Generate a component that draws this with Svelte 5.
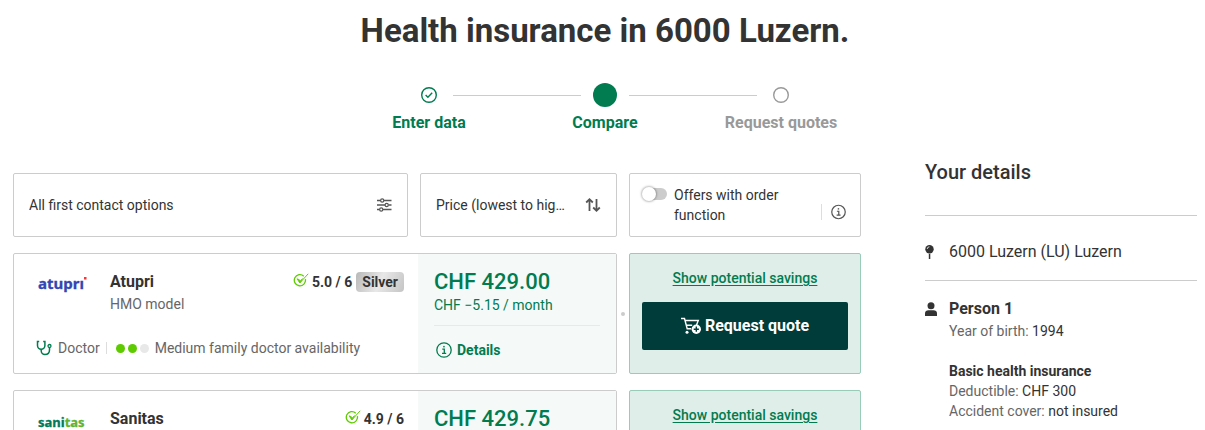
<script lang="ts">
	type Offer = {
		id: string;
		name: string;
		model: string;
		rating: string;
		badge: string | null;
		price: string;
		difference: string;
		availability: number;
	};

	const steps = [
		{ label: 'Enter data', state: 'done' },
		{ label: 'Compare', state: 'current' },
		{ label: 'Request quotes', state: 'open' }
	];

	const offers: Offer[] = [
		{
			id: 'atupri',
			name: 'Atupri',
			model: 'HMO model',
			rating: '5.0 / 6',
			badge: 'Silver',
			price: 'CHF 429.00',
			difference: 'CHF −5.15 / month',
			availability: 2
		},
		{
			id: 'sanitas',
			name: 'Sanitas',
			model: '',
			rating: '4.9 / 6',
			badge: null,
			price: 'CHF 429.75',
			difference: '',
			availability: 0
		}
	];

	let sorting = $state('price-asc');
	let onlyOrderable = $state(false);
</script>

{#snippet infoIcon()}
	<svg class="info-icon" viewBox="0 0 16 16" fill="none" stroke="currentColor" aria-hidden="true">
		<circle cx="8" cy="8" r="7.2" stroke-width="1.3" />
		<path d="M6.3 7.2h2v4M6 11.3h4.2" stroke-width="1.3" />
		<rect x="7.2" y="3.9" width="1.5" height="1.5" fill="currentColor" stroke="none" />
	</svg>
{/snippet}

<div class="page">
	<h1>Health insurance in 6000 Luzern.</h1>

	<ol class="steps">
		{#each steps as step (step.label)}
			<li class="step {step.state}">
				<div class="track">
					<span class="line"></span>
					<span class="marker">
						{#if step.state === 'current'}
							<svg width="24" height="24" viewBox="0 0 24 24" aria-hidden="true">
								<circle cx="12" cy="12" r="12" fill="currentColor" />
							</svg>
						{:else}
							<svg
								width="16"
								height="16"
								viewBox="0 0 16 16"
								fill="none"
								stroke="currentColor"
								aria-hidden="true"
							>
								<circle cx="8" cy="8" r="7.3" stroke-width="1.4" />
								{#if step.state === 'done'}
									<path d="M4.6 8l2.3 2.2 4.3-4.4" stroke-width="1.4" />
								{/if}
							</svg>
						{/if}
					</span>
					<span class="line"></span>
				</div>
				<span class="step-label">{step.label}</span>
			</li>
		{/each}
	</ol>

	<div class="columns">
		<main>
			<div class="filters">
				<button type="button" class="box contact-filter">
					<span>All first contact options</span>
					<svg width="16" height="16" viewBox="0 0 16 16" fill="none" stroke="currentColor" aria-hidden="true">
						<path d="M1 3.5h3.5M8 3.5h7.5M1 8h8M12.5 8h3M1 12.5h2.5M7 12.5h8.5" stroke-width="1.4" />
						<circle cx="6.2" cy="3.5" r="1.6" stroke-width="1.2" />
						<circle cx="10.7" cy="8" r="1.6" stroke-width="1.2" />
						<circle cx="5.2" cy="12.5" r="1.6" stroke-width="1.2" />
					</svg>
				</button>

				<div class="box sort-filter">
					<select aria-label="Sort" bind:value={sorting}>
						<option value="price-asc">Price (lowest to highest)</option>
						<option value="price-desc">Price (highest to lowest)</option>
					</select>
					<svg width="16" height="16" viewBox="0 0 16 16" fill="none" stroke="currentColor" aria-hidden="true">
						<path
							d="M4.5 14V2.5M1.2 5.5l3.3-3.3 3.3 3.3M11.5 2v11.5M8.2 10.5l3.3 3.3 3.3-3.3"
							stroke-width="1.8"
						/>
					</svg>
				</div>

				<div class="box order-filter">
					<label>
						<input type="checkbox" role="switch" bind:checked={onlyOrderable} />
						<span>Offers with order function</span>
					</label>
					<button type="button" class="info-button" aria-label="Information">
						{@render infoIcon()}
					</button>
				</div>
			</div>

			{#each offers as offer (offer.id)}
				<div class="offer">
					<article class="box card">
						<div class="summary">
							<div class="summary-top">
								<svg class="logo" width="50" height="24" viewBox="0 0 50 24" role="img" aria-label={offer.name}>
									{#if offer.id === 'atupri'}
										<text x="0" y="16" font-size="15" fill="#3346b4" stroke="#3346b4">atuprı</text>
										<rect x="46" y="4" width="2.5" height="2.5" fill="#f33" />
									{:else}
										<text x="0" y="17" font-size="13" fill="#00785a" stroke="#00785a"
											>sani<tspan fill="#62b22f" stroke="#62b22f">tas</tspan></text
										>
									{/if}
								</svg>
								<div class="insurer">
									<h2>{offer.name}</h2>
									{#if offer.model}<p>{offer.model}</p>{/if}
								</div>
								<div class="rating">
									<svg width="16" height="16" viewBox="0 0 16 16" fill="none" stroke="#5ecb00" aria-hidden="true">
										<path d="M10.8 3.2A5.6 5.6 0 1 0 12.4 6.2" stroke-width="1.3" />
										<path d="M6.8 10L15.2 .8" stroke-width="1" />
										<path d="M4 5.8l2.2.8.8 1.600 2.600-2.600-2.800 4.400z" fill="#5ecb00" stroke-width=".8" />
									</svg>
									<strong>{offer.rating}</strong>
									{#if offer.badge}<span class="badge">{offer.badge}</span>{/if}
								</div>
							</div>
							{#if offer.availability}
								<div class="contact">
									<svg width="16" height="16" viewBox="0 0 16 16" fill="none" stroke="#007c50" aria-hidden="true">
										<path d="M3.2 1.5H1.5v4a3.7 3.7 0 0 0 7.4 0v-4H7.2" stroke-width="1.5" />
										<path
											d="M5.2 9.2v1.600a3.700 3.700 0 0 0 3.700 3.700c3 0 4.600-2 4.600-4.500V7.500"
											stroke-width="1.5"
										/>
										<circle cx="13.5" cy="6" r="1.5" stroke-width="1.3" />
									</svg>
									<span>Doctor</span>
									<span class="divider"></span>
									<span class="dots">
										{#each [1, 2, 3] as level}
											<i class:filled={level <= offer.availability}></i>
										{/each}
									</span>
									<span>Medium family doctor availability</span>
								</div>
							{/if}
						</div>
						<div class="pricing">
							<p class="price">{offer.price}</p>
							{#if offer.difference}
								<p class="difference">{offer.difference}</p>
								<button type="button" class="details">
									{@render infoIcon()}
									<span>Details</span>
								</button>
							{/if}
						</div>
					</article>
					<span class="joint"></span>
					<div class="box action">
						<a href="#savings">Show potential savings</a>
						{#if offer.difference}
							<button type="button" class="request">
								<svg width="20" height="18" viewBox="0 0 20 18" fill="none" stroke="#fff" aria-hidden="true">
									<path d="M0 1.5h3.5l2.7 10.300h4M4 3.5h13.300L15.500 8M5.200 8.200h6" stroke-width="1.4" />
									<circle cx="6" cy="15.3" r="1.500" fill="#fff" stroke="none" />
									<circle cx="15.3" cy="12.2" r="4.7" fill="#fff" stroke="none" />
									<path d="M15.3 9.600v5.200M12.700 12.200h5.200" stroke="#003c3a" stroke-width="1.4" />
								</svg>
								<span>Request quote</span>
							</button>
						{/if}
					</div>
				</div>
			{/each}
		</main>

		<aside>
			<h2>Your details</h2>
			<div class="detail-row">
				<svg width="12" height="16" viewBox="0 0 12 16" aria-hidden="true">
					<circle cx="4.5" cy="5.2" r="4.2" fill="#333" />
					<path d="M3.8 9.8h1.5V15H3.8z" fill="#333" />
					<path d="M2.2 5a2.3 2.3 0 0 1 2.2-2.2" fill="none" stroke="#fff" stroke-width=".8" />
				</svg>
				<span>6000 Luzern (LU) Luzern</span>
			</div>
			<div class="detail-row person">
				<svg width="12" height="16" viewBox="0 0 12 16" fill="#333" aria-hidden="true">
					<circle cx="6" cy="4.7" r="3.5" />
					<path d="M0 15v-2.500C0 10.500 1.500 9.300 3.500 9.300h5c2 0 3.500 1.200 3.500 3.200V15z" />
				</svg>
				<div>
					<h3>Person 1</h3>
					<p>Year of birth: <b>1994</b></p>
					<h4>Basic health insurance</h4>
					<p>Deductible: <b>CHF 300</b></p>
					<p>Accident cover: <b>not insured</b></p>
				</div>
			</div>
		</aside>
	</div>
</div>

<style>
	:global(body) {
		background: #fff;
	}

	.page {
		box-sizing: border-box;
		height: 100vh;
		overflow: hidden;
		padding: 11px 8px 0 13px;
		font-family: Roboto, sans-serif;
		font-size: 14px;
		line-height: 20px;
		color: #333;
	}

	.page * {
		box-sizing: border-box;
	}

	h1,
	h2,
	h3,
	h4,
	p {
		margin: 0;
	}

	button,
	select,
	input {
		margin: 0;
		font: inherit;
		color: inherit;
	}

	button {
		padding: 0;
		border: 0;
		background: none;
		cursor: pointer;
	}

	svg {
		flex: none;
	}

	h1 {
		font-size: 33px;
		line-height: 40px;
		text-align: center;
	}

	/* Progress steps */
	.steps {
		display: flex;
		justify-content: center;
		margin: 32px 0 0;
		padding: 0;
		list-style: none;
	}

	.step {
		width: 176px;
		text-align: center;
		color: #007c50;
	}

	.step.open {
		color: #999;
	}

	.track {
		display: grid;
		grid-template-columns: 1fr 48px 1fr;
		align-items: center;
		height: 24px;
	}

	.line {
		height: 1px;
		background: #ccc;
	}

	.step:first-child .line:first-child,
	.step:last-child .line:last-child {
		visibility: hidden;
	}

	.marker {
		display: flex;
		justify-content: center;
	}

	.step-label {
		display: block;
		margin-top: 4px;
		font-size: 16px;
		line-height: 24px;
		font-weight: 700;
	}

	.columns {
		display: grid;
		grid-template-columns: minmax(0, 1fr) 272px;
		gap: 64px;
		margin-top: 38px;
	}

	.box {
		border: 1px solid #ccc;
		border-radius: 2px;
	}

	/* Filters */
	.filters {
		display: grid;
		grid-template-columns: minmax(0, 1fr) 197px 232px;
		gap: 12px;
		height: 64px;
	}

	.contact-filter,
	.sort-filter {
		display: flex;
		align-items: center;
		justify-content: space-between;
		padding: 0 15px;
	}

	.contact-filter svg,
	.sort-filter svg {
		color: #555;
	}

	select {
		width: 130px;
		padding: 0;
		border: 0;
		background: none;
		appearance: none;
		overflow: hidden;
		text-overflow: ellipsis;
		white-space: nowrap;
	}

	.order-filter {
		display: flex;
		align-items: flex-end;
		justify-content: space-between;
		padding: 11px 14px 11px 12px;
	}

	.order-filter label {
		display: flex;
		gap: 7px;
		width: 150px;
	}

	input[role='switch'] {
		flex: none;
		appearance: none;
		width: 24px;
		height: 12px;
		margin: 3px 0 0 1px;
		border-radius: 6px;
		background: #ccc;
	}

	input[role='switch']::before {
		content: '';
		display: block;
		width: 14px;
		height: 14px;
		margin: -1px;
		border-radius: 50%;
		background: #fff;
		box-shadow: 0 0 2px 1px rgba(0, 0, 0, 0.25);
	}

	input[role='switch']:checked {
		background: #007c50;
	}

	input[role='switch']:checked::before {
		margin-left: 11px;
	}

	.info-icon {
		display: block;
		width: 16px;
		height: 16px;
	}

	.info-button {
		margin-bottom: 5px;
		padding-left: 9px;
		border-left: 1px solid #ddd;
		color: #555;
	}

	.info-button .info-icon {
		width: 15px;
	}

	/* Offers */
	.offer {
		display: grid;
		grid-template-columns: minmax(0, 1fr) 12px 232px;
		align-items: stretch;
		min-height: 121px;
		margin-top: 16px;
	}

	.card {
		display: grid;
		grid-template-columns: minmax(0, 1fr) 198px;
	}

	.summary {
		display: flex;
		flex-direction: column;
		justify-content: space-between;
		padding: 18px 14px 15px 22px;
	}

	.summary-top {
		display: flex;
		align-items: flex-start;
	}

	.logo {
		margin: 1px 0 0 2px;
		overflow: visible;
		font-family: 'Noto Sans', sans-serif;
		font-weight: 700;
		stroke-width: 0.3;
	}

	.insurer {
		flex: 1;
		margin-left: 22px;
		color: #666;
	}

	.insurer h2 {
		font-size: 16px;
		line-height: 20px;
		color: #333;
	}

	.insurer p {
		margin-top: 2px;
	}

	.rating {
		display: flex;
		align-items: center;
		gap: 3px;
		height: 20px;
	}

	.rating svg {
		margin-bottom: 2px;
	}

	.badge {
		margin-left: 1px;
		padding: 0 6px;
		border-radius: 4px;
		background: linear-gradient(115deg, #b8b8b8, #e8e8e8 50%, #c4c4c4);
		font-weight: 700;
	}

	.contact {
		display: flex;
		align-items: center;
		gap: 6px;
		color: #666;
	}

	.divider {
		width: 1px;
		height: 12px;
		background: #ddd;
	}

	.dots {
		display: flex;
		gap: 3px;
		margin-left: 3px;
	}

	.dots i {
		width: 9px;
		height: 9px;
		border-radius: 50%;
		background: #e8e8e8;
	}

	.dots i.filled {
		background: #5ecb00;
	}

	.pricing {
		padding: 15px 16px 0;
		background: #f5f9f8;
		color: #007c50;
	}

	.price {
		font-size: 22px;
		line-height: 26px;
		font-weight: 500;
	}

	.details {
		display: flex;
		align-items: center;
		gap: 5px;
		width: 100%;
		margin-top: 10px;
		padding: 14px 0 0 2px;
		border-top: 1px solid #e6eae9;
		font-weight: 700;
	}

	.joint {
		align-self: center;
		justify-self: center;
		width: 4px;
		height: 4px;
		border-radius: 50%;
		background: #ccc;
	}

	.action {
		display: flex;
		flex-direction: column;
		align-items: center;
		padding: 14px 12px;
		border-color: #99cbb9;
		background: #e0eee9;
	}

	.action a {
		color: #007c50;
		font-weight: 500;
		text-underline-offset: 2px;
	}

	.request {
		display: flex;
		align-items: center;
		justify-content: center;
		gap: 4px;
		width: 100%;
		height: 48px;
		margin-top: 14px;
		border-radius: 2px;
		background: #003c3a;
		color: #fff;
		font-size: 16px;
		font-weight: 700;
	}

	/* Personal details */
	aside {
		margin-top: -14px;
	}

	aside h2 {
		padding-bottom: 30px;
		border-bottom: 1px solid #ccc;
		font-size: 20px;
		line-height: 26px;
		font-weight: 500;
	}

	.detail-row {
		display: flex;
		gap: 12px;
		padding: 24px 0 16px;
		border-bottom: 1px solid #ccc;
		font-size: 16px;
		line-height: 24px;
	}

	.detail-row svg {
		margin-top: 4px;
	}

	.person {
		padding-top: 16px;
		border-bottom: 0;
	}

	.person h3 {
		font-size: 16px;
		line-height: 24px;
	}

	.person h4 {
		margin-top: 20px;
	}

	.person h4,
	.person p {
		font-size: 14px;
		line-height: 20px;
	}

	.person p {
		color: #666;
	}

	.person b {
		font-weight: 400;
		color: #333;
	}
</style>
